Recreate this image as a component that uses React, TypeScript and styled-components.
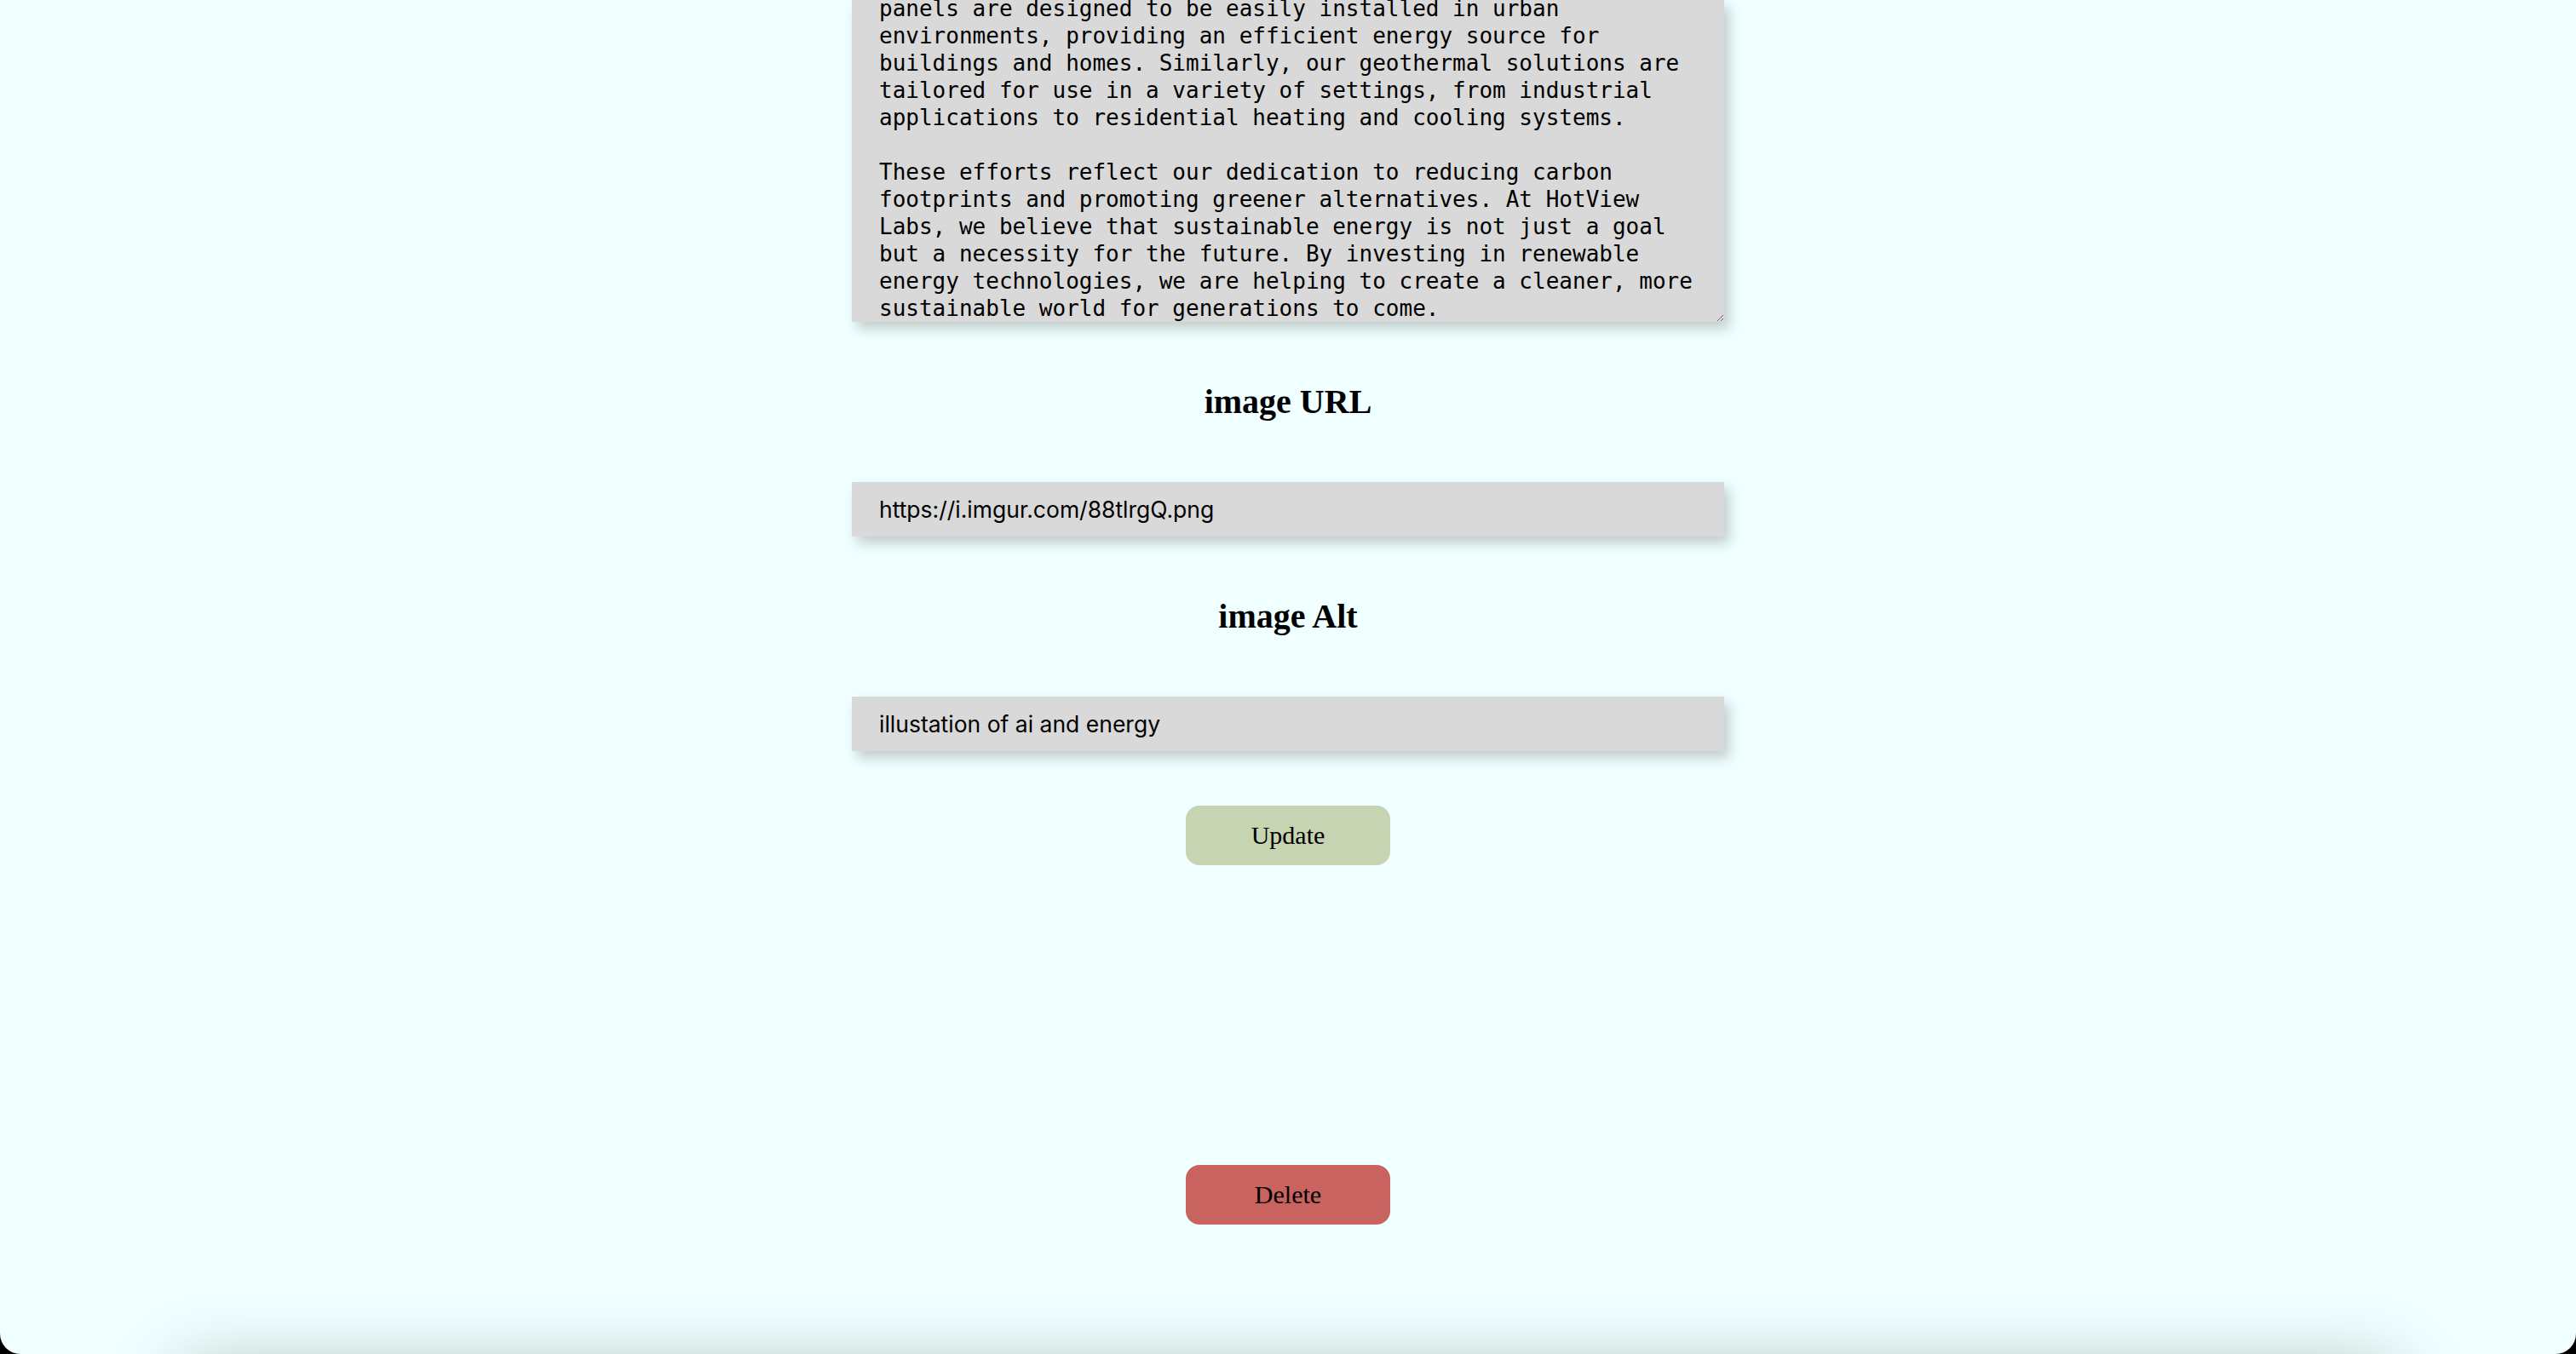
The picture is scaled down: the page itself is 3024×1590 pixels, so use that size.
import React from "react";
import styled, { createGlobalStyle } from "styled-components";

const GlobalStyle = createGlobalStyle`
  html, body {
    margin: 0;
    padding: 0;
    background: #000;
  }
  #root {
    min-height: 100vh;
  }
`;

const Page = styled.main`
  height: 100vh;
  overflow: hidden;
  background: #f0ffff;
  border-radius: 0 0 24px 24px;
  display: flex;
  flex-direction: column;
  align-items: center;
`;

const Form = styled.form`
  width: 1024px;
  flex-shrink: 0;
  display: flex;
  flex-direction: column;
  align-items: center;
`;

const fieldShadow = "6px 8px 14px rgba(0, 0, 0, 0.2)";

const TextArea = styled.textarea`
  box-sizing: border-box;
  width: 100%;
  height: 378px;
  margin: 0;
  padding: 0 32px;
  border: none;
  outline: none;
  background: #d9d9d9;
  color: #000;
  font-family: "DejaVu Sans Mono", "Liberation Mono", monospace;
  font-size: 26px;
  line-height: 32px;
  box-shadow: ${fieldShadow};
  scrollbar-width: none;
  &::-webkit-scrollbar {
    display: none;
  }
`;

const Label = styled.h2`
  margin: 70px 0;
  font-family: "Liberation Serif", "DejaVu Serif", serif;
  font-weight: 700;
  font-size: 40px;
  line-height: 48px;
  color: #000;
  text-align: center;
`;

const Field = styled.input`
  box-sizing: border-box;
  width: 100%;
  height: 64px;
  margin: 0;
  padding: 0 32px;
  border: none;
  outline: none;
  background: #d9d9d9;
  color: #000;
  font-family: Inter, "Liberation Sans", sans-serif;
  font-size: 26.5px;
  box-shadow: ${fieldShadow};
`;

const ActionButton = styled.button<{ $tone: "update" | "delete"; $gap: number }>`
  flex-shrink: 0;
  width: 240px;
  height: 70px;
  margin-top: ${(p) => p.$gap}px;
  border: none;
  border-radius: 16px;
  background: ${(p) => (p.$tone === "update" ? "#c6d4b1" : "#c9635f")};
  color: #000;
  font-family: "Liberation Serif", "DejaVu Serif", serif;
  font-size: 30px;
  cursor: pointer;
`;

const Footer = styled.footer`
  flex-shrink: 0;
  width: 2600px;
  height: 400px;
  margin-top: 172px;
  background: #f0ffff;
  box-shadow: 0 0 80px rgba(0, 0, 0, 0.3);
`;

const body = `panels are designed to be easily installed in urban environments, providing an efficient energy source for buildings and homes. Similarly, our geothermal solutions are tailored for use in a variety of settings, from industrial applications to residential heating and cooling systems.

These efforts reflect our dedication to reducing carbon footprints and promoting greener alternatives. At HotView Labs, we believe that sustainable energy is not just a goal but a necessity for the future. By investing in renewable energy technologies, we are helping to create a cleaner, more sustainable world for generations to come.`;

export default function App() {
  const scrollToEnd = (el: HTMLTextAreaElement | null) => {
    if (el) el.scrollTop = el.scrollHeight;
  };
  return (
    <>
      <GlobalStyle />
      <Page>
        <Form onSubmit={(e) => e.preventDefault()}>
          <TextArea ref={scrollToEnd} defaultValue={body} spellCheck={false} />
          <Label>image URL</Label>
          <Field type="text" defaultValue="https://i.imgur.com/88tlrgQ.png" spellCheck={false} />
          <Label>image Alt</Label>
          <Field type="text" defaultValue="illustation of ai and energy" spellCheck={false} />
          <ActionButton type="submit" $tone="update" $gap={64}>
            Update
          </ActionButton>
        </Form>
        <ActionButton type="button" $tone="delete" $gap={352}>
          Delete
        </ActionButton>
        <Footer />
      </Page>
    </>
  );
}
